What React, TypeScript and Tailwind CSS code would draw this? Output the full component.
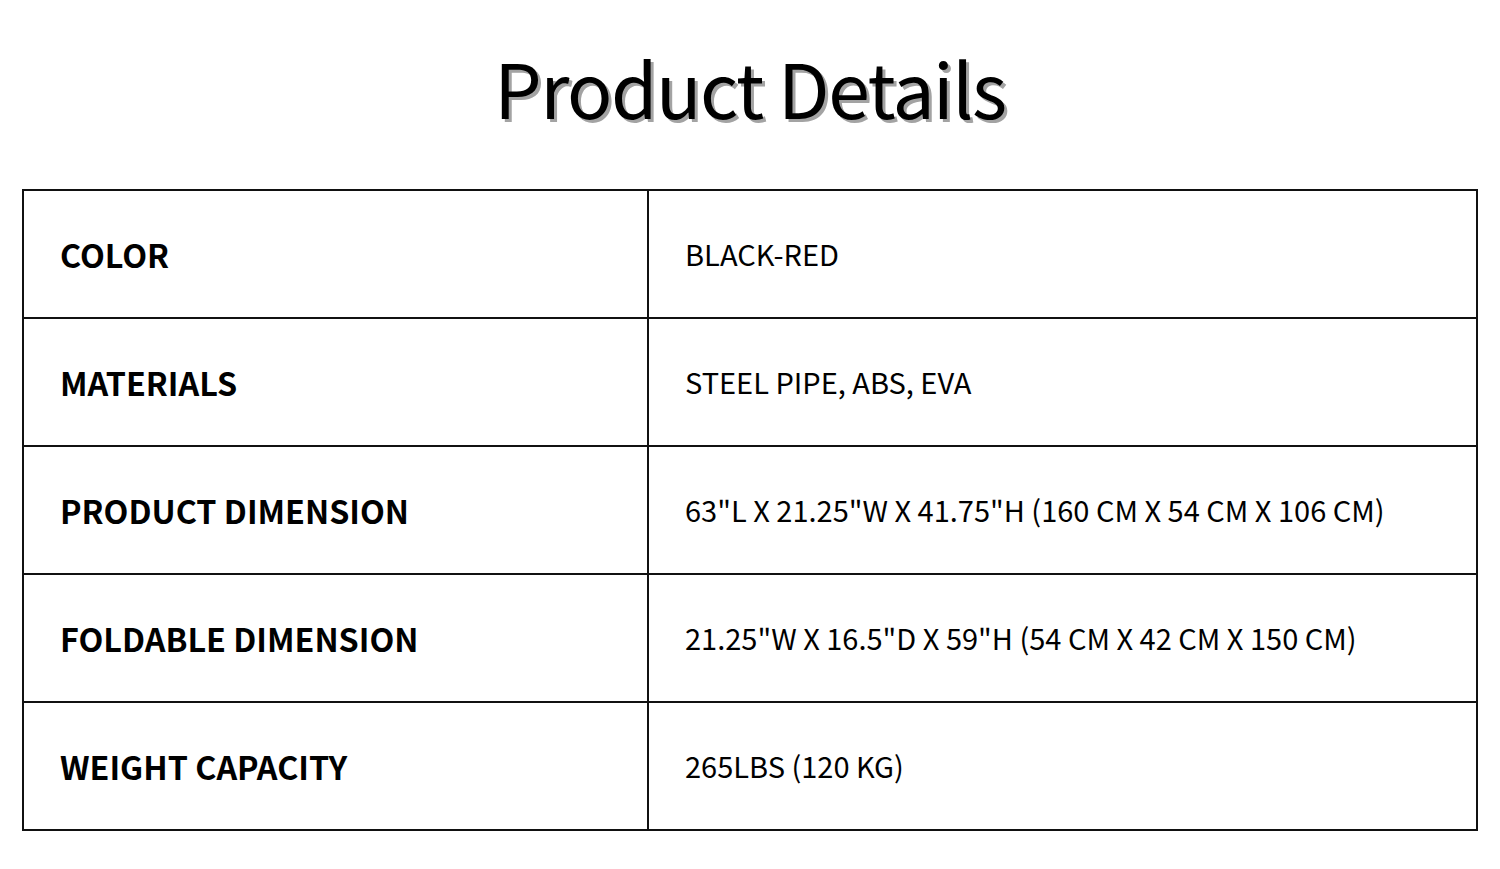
const rows = [
  { label: 'COLOR', value: 'BLACK-RED' },
  { label: 'MATERIALS', value: 'STEEL PIPE, ABS, EVA' },
  { label: 'PRODUCT DIMENSION', value: '63"L X 21.25"W X 41.75"H (160 CM X 54 CM X 106 CM)' },
  { label: 'FOLDABLE DIMENSION', value: '21.25"W X 16.5"D X 59"H (54 CM X 42 CM X 150 CM)' },
  { label: 'WEIGHT CAPACITY', value: '265LBS (120 KG)' },
];

export default function App() {
  return (
    <div
      className="w-[1500px] h-[869px] bg-white text-black"
      style={{ fontFamily: '"Noto Sans CJK SC", "Noto Sans", sans-serif' }}
    >
      <h1 className="pt-[42px] h-[189px] text-center text-[75px] leading-[90px] tracking-[-1.5px] font-normal [text-shadow:3px_3px_0_#a3a3a3]">
        Product Details
      </h1>
      <div className="mx-[22px] border-2 border-[#111]">
        {rows.map((r, i) => (
          <div
            key={r.label}
            className={`grid grid-cols-[625px_1fr] ${i > 0 ? 'h-[128px] border-t-2 border-[#111]' : 'h-[126px]'}`}
          >
            <div className="flex items-center pl-[36px] border-r-2 border-[#111] text-[32.3px] font-bold">
              {r.label}
            </div>
            <div className="flex items-center pl-[36px] text-[29px] font-normal">{r.value}</div>
          </div>
        ))}
      </div>
    </div>
  );
}
